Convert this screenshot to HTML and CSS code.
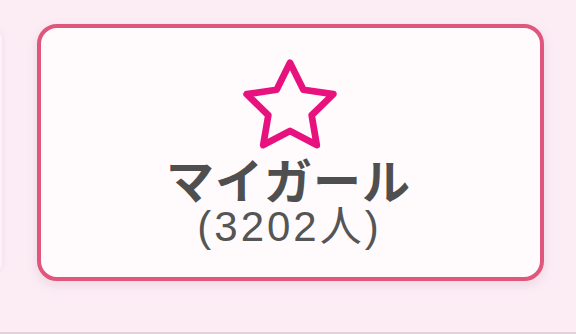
FILE: index.html
```html
<!DOCTYPE html>
<html lang="ja">
<head>
<meta charset="utf-8">
<link rel="stylesheet" href="styles.css">
</head>
<body>
<div class="page">
  <div class="side-card"></div>
  <div class="card">
    <svg class="star" viewBox="0 0 24 24" width="104" height="104" aria-hidden="true">
      <polygon points="12 2 15.09 8.26 22 9.27 17 14.14 18.18 21.02 12 17.77 5.82 21.02 7 14.14 2 9.27 8.91 8.26" fill="none" stroke="#e8127e" stroke-width="1.55" stroke-linejoin="round"/>
    </svg>
    <div class="title">マイガール</div>
    <div class="count">(3202人)</div>
  </div>
</div>
</body>
</html>
```

FILE: styles.css
```css
html, body {
  margin: 0;
  padding: 0;
}
body {
  width: 576px;
  height: 334px;
  overflow: hidden;
  background: #fcedf5;
  font-family: "Liberation Sans", "Noto Sans CJK JP", sans-serif;
}
.page {
  position: relative;
  display: flex;
  align-items: flex-start;
  padding: 24px 0 0 37px;
  box-sizing: border-box;
  height: 334px;
  border-bottom: 2px solid #e4d2da;
}
.side-card {
  position: absolute;
  left: -20px;
  top: 26px;
  width: 22px;
  height: 250px;
  background: #fdf2f8;
  box-shadow: 2px 0 5px rgba(180, 120, 150, 0.08);
  border-radius: 0 14px 14px 0;
}
.card {
  width: 507px;
  height: 257px;
  box-sizing: border-box;
  border: 4px solid #e0567c;
  border-radius: 20px;
  background: #fffbfd;
  box-shadow: 0 4px 12px rgba(120, 60, 90, 0.12);
  display: flex;
  flex-direction: column;
  align-items: center;
  padding-top: 26px;
}
.star {
  display: block;
  margin-left: -2px;
}
.title {
  font-family: "Noto Sans CJK JP", sans-serif;
  font-weight: 700;
  font-size: 48px;
  line-height: 48px;
  height: 48px;
  color: #4f4f4f;
  margin-top: -4px;
  letter-spacing: 1px;
  margin-left: -4px;
}
.count {
  font-family: "Liberation Sans", "Noto Sans CJK JP", sans-serif;
  font-size: 42px;
  line-height: 44px;
  color: #555555;
  letter-spacing: 3px;
  margin-top: 3px;
  margin-left: -2px;
}
```
